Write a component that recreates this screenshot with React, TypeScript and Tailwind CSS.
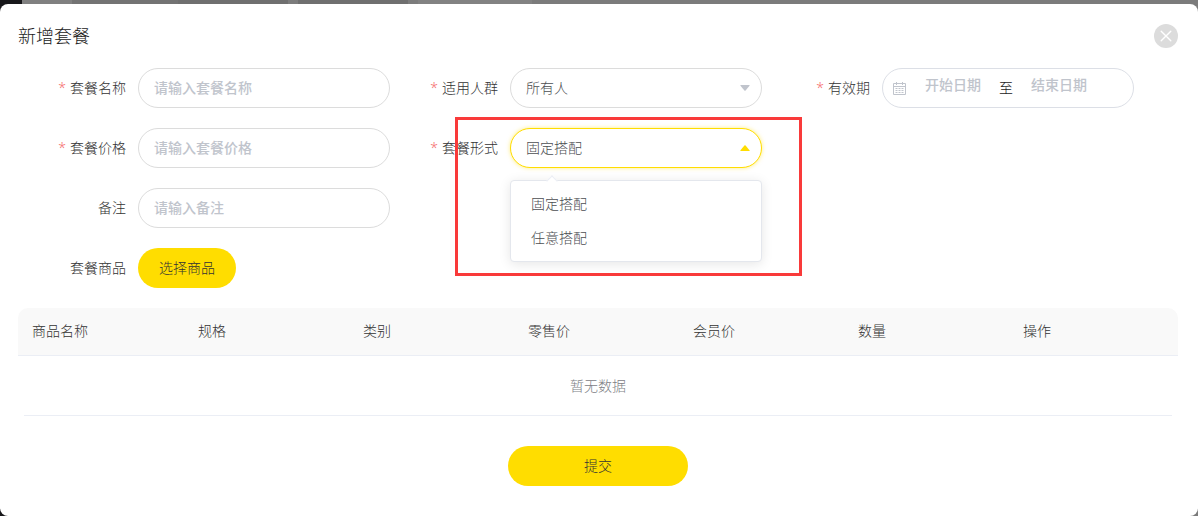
import { useState } from "react";
import type { ReactNode } from "react";

interface FieldProps {
  id: string;
  label: string;
  required?: boolean;
  children: ReactNode;
}

const columns = ["商品名称", "规格", "类别", "零售价", "会员价", "数量", "操作"];
const modes = ["固定搭配", "任意搭配"];

const inputClass =
  "h-10 w-full rounded-full border border-[#dcdcdc] bg-white px-[15px] pb-0.5 text-[#606266] outline-none placeholder:font-medium placeholder:text-[#c0c4cc]";
const dateClass =
  "h-8 w-[86px] pb-2 text-center text-[#606266] outline-none placeholder:font-medium placeholder:text-[#c0c4cc]";

function Field({ id, label, required, children }: FieldProps) {
  return (
    <div className="flex">
      <label htmlFor={id} className="w-[120px] shrink-0 pr-3 text-right leading-10 text-[#333333]">
        {required && <span className="mr-1 text-[#f56c6c]">*</span>}
        {label}
      </label>
      <div className="relative h-10 w-[252px]">{children}</div>
    </div>
  );
}

function Caret({ className }: { className: string }) {
  return (
    <svg viewBox="0 0 10 6" className={`pointer-events-none absolute right-3 top-[17px] h-1.5 w-2.5 ${className}`} fill="currentColor">
      <path d="M1 0h8q1 0 .5.8L5.6 5.5q-.6.6-1.2 0L.5.8Q0 0 1 0Z" />
    </svg>
  );
}

function CalendarIcon() {
  return (
    <svg viewBox="0 0 13 13" className="h-[13px] w-[13px] shrink-0 text-[#c0c4cc]" fill="none" stroke="currentColor">
      <path d="M.5 1.5h12v11H.5zM.5 4.5h12M3.5 0v3M9.5 0v3" />
      <path d="M2.5 6.5h2M5.5 6.5h2M8.5 6.5h2M2.5 8.5h2M5.5 8.5h2M8.5 8.5h2M2.5 10.5h2M5.5 10.5h2M8.5 10.5h2" />
    </svg>
  );
}

// dimmed page behind the dialog
function Backdrop() {
  return (
    <div className="absolute inset-0 flex bg-[#7b7b7b]">
      <div className="w-[22px] bg-[#17171a]" />
      <div className="w-[50px] bg-[#808080]" />
      <div className="w-[106px] bg-[#737373]" />
      <div className="w-[110px] bg-[#6f6f6f]" />
      <div className="w-2.5 bg-[#7c7c7c]" />
      <div className="w-[110px] bg-[#6f6f6f]" />
      <div className="w-2.5 bg-[#7c7c7c]" />
      <div className="w-[114px] bg-[#828282]" />
    </div>
  );
}

export default function App() {
  const [mode, setMode] = useState(modes[0]);
  const [open, setOpen] = useState(true);

  return (
    <div className="relative pt-1 font-['Noto_Sans','Noto_Sans_CJK_SC',sans-serif] text-sm font-light">
      <Backdrop />
      <div role="dialog" aria-labelledby="title" className="relative rounded-lg bg-white pb-[30px] pl-[18px] pr-5 pt-5">
        <header className="mb-5 flex h-6 items-center justify-between">
          <h1 id="title" className="text-lg font-light text-[#222222]">新增套餐</h1>
          <button type="button" aria-label="关闭" className="flex size-6 items-center justify-center rounded-full bg-[#dcdcdc]">
            <svg viewBox="0 0 12 12" className="size-3" fill="none" stroke="white" strokeWidth="1.4" strokeLinecap="round">
              <path d="M1.2 1.2l9.6 9.6M10.8 1.2l-9.6 9.6" />
            </svg>
          </button>
        </header>

        <form onSubmit={(e) => e.preventDefault()}>
          <div className="flex flex-col gap-5">
            <div className="flex flex-wrap gap-y-5">
              <Field id="name" label="套餐名称" required>
                <input id="name" type="text" placeholder="请输入套餐名称" className={inputClass} />
              </Field>
              <Field id="crowd" label="适用人群" required>
                <select id="crowd" className="h-10 w-full appearance-none rounded-full border border-[#dcdcdc] bg-white px-[15px] text-[#4c4e52] outline-none">
                  <option>所有人</option>
                </select>
                <Caret className="text-[#c0c4cc]" />
              </Field>
              <Field id="start" label="有效期" required>
                <div className="flex h-10 items-center rounded-full border border-[#dcdfe6] px-2.5">
                  <CalendarIcon />
                  <input id="start" type="text" placeholder="开始日期" className={`ml-1 ${dateClass}`} />
                  <span className="w-5 text-center text-[#222222]">至</span>
                  <input type="text" aria-label="结束日期" placeholder="结束日期" className={dateClass} />
                </div>
              </Field>
            </div>

            <div className="flex flex-wrap gap-y-5">
              <Field id="price" label="套餐价格" required>
                <input id="price" type="text" placeholder="请输入套餐价格" className={inputClass} />
              </Field>
              <Field id="mode" label="套餐形式" required>
                <select
                  id="mode"
                  value={mode}
                  onChange={(e) => setMode(e.target.value)}
                  onMouseDown={(e) => { e.preventDefault(); setOpen(!open); }}
                  className="h-10 w-full appearance-none rounded-full border border-[#ffdd00] bg-white px-[15px] text-[#4c4e52] shadow-[0_0_4px_rgba(255,221,0,0.5)] outline-none"
                >
                  {modes.map((item) => (
                    <option key={item}>{item}</option>
                  ))}
                </select>
                <Caret className="rotate-180 text-[#ffdd00]" />
                {open && (
                  <div className="absolute left-0 top-[52px] z-10 w-full rounded border border-[#e4e7ed] bg-white py-1.5 shadow-[0_2px_12px_rgba(0,0,0,0.1)]">
                    <div className="absolute -top-1 left-[37px] size-2 rotate-45 border-l border-t border-[#ebeef5] bg-white" />
                    <ul>
                      {modes.map((item) => (
                        <li key={item}>
                          <button
                            type="button"
                            onClick={() => { setMode(item); setOpen(false); }}
                            className="block h-[34px] w-full px-5 text-left text-[#4c4e52]"
                          >
                            {item}
                          </button>
                        </li>
                      ))}
                    </ul>
                  </div>
                )}
                <div className="pointer-events-none absolute -left-[55px] -top-[11px] z-20 h-[159px] w-[347px] border-3 border-[#f93a3a]" />
              </Field>
            </div>

            <Field id="remark" label="备注">
              <input id="remark" type="text" placeholder="请输入备注" className={inputClass} />
            </Field>

            <Field id="goods" label="套餐商品">
              <button id="goods" type="button" className="h-10 w-[98px] rounded-full bg-[#ffdd00] text-[#333333]">
                选择商品
              </button>
            </Field>
          </div>

          <table className="mt-5 w-full table-fixed border-separate border-spacing-0">
            <thead>
              <tr>
                {columns.map((column) => (
                  <th
                    key={column}
                    className="h-12 w-[165px] border-b border-[#ebeef5] bg-[#f9f9f9] px-3.5 pb-0.5 text-left font-light text-[#333333] first:w-[166px] first:rounded-tl-[10px] last:w-auto last:rounded-tr-[10px]"
                  >
                    {column}
                  </th>
                ))}
              </tr>
            </thead>
            <tbody>
              <tr>
                <td colSpan={7} className="px-1.5 text-center text-[#7d8085]">
                  <div className="h-[60px] border-b border-[#ebeef5] leading-[60px]">暂无数据</div>
                </td>
              </tr>
            </tbody>
          </table>

          <div className="mt-[30px] flex justify-center">
            <button type="submit" className="h-10 w-[180px] rounded-full bg-[#ffdd00] text-[#333333]">
              提交
            </button>
          </div>
        </form>
      </div>
    </div>
  );
}
